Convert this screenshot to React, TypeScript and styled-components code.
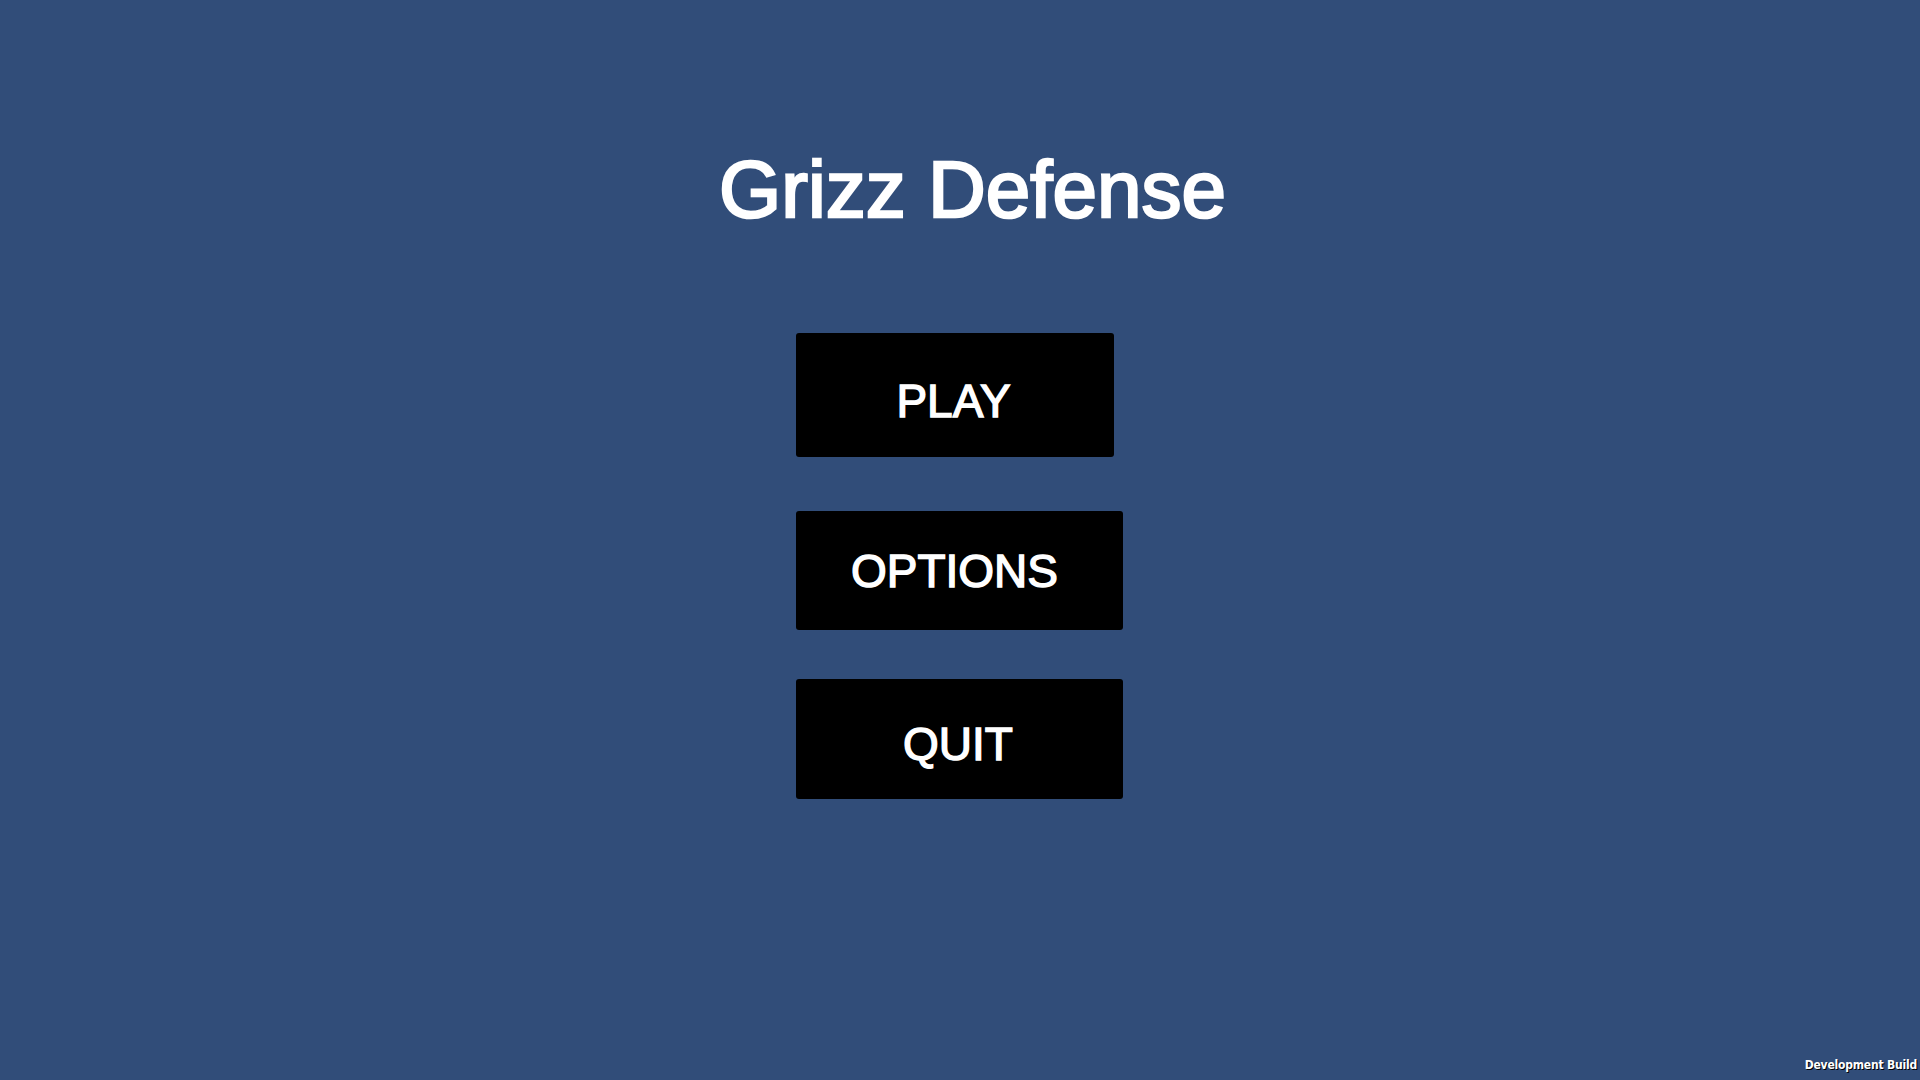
import styled, { createGlobalStyle } from "styled-components";

const Global = createGlobalStyle`
  html, body {
    margin: 0;
    padding: 0;
    background: #314d79;
    overflow: hidden;
  }
`;

const Screen = styled.div`
  position: relative;
  width: 1920px;
  height: 1080px;
  background: #314d79;
  display: flex;
  flex-direction: column;
  align-items: center;
  padding-top: 150px;
  box-sizing: border-box;
  font-family: "Liberation Sans", Arial, sans-serif;
  color: #fff;
`;

const Title = styled.h1`
  margin: 0 0 0 25px;
  font-size: 80px;
  line-height: 80px;
  font-weight: 400;
  -webkit-text-stroke: 2.5px #fff;
`;

const Menu = styled.div`
  width: 327px;
  margin-top: 103px;
  margin-right: 1px;
  display: flex;
  flex-direction: column;
  align-items: flex-start;
`;

const MenuButton = styled.button<{ $w: number; $h: number; $mt?: number; $dy?: number; $dx?: number }>`
  width: ${({ $w }) => $w}px;
  height: ${({ $h }) => $h}px;
  margin-top: ${({ $mt }) => $mt ?? 0}px;
  padding: ${({ $dy }) => ($dy ?? 0) * 2}px 0 0 0;
  background: #000;
  border: none;
  border-radius: 3px;
  display: flex;
  align-items: center;
  justify-content: center;
  color: #fff;
  font-family: "Liberation Sans", Arial, sans-serif;
  font-size: 46px;
  line-height: 46px;
  -webkit-text-stroke: 1.4px #fff;
  cursor: pointer;

  span {
    position: relative;
    left: ${({ $dx }) => $dx ?? 0}px;
  }
`;

const DevBuild = styled.div`
  position: absolute;
  right: 3px;
  bottom: 9px;
  font-family: "DejaVu Sans Condensed", "DejaVu Sans", sans-serif;
  font-weight: 700;
  font-size: 12px;
  line-height: 12px;
  color: #fff;
  text-shadow: 1px 1px 0 #000;
  letter-spacing: -0.2px;
`;

export default function App() {
  return (
    <>
      <Global />
      <Screen>
        <Title>Grizz Defense</Title>
        <Menu>
          <MenuButton $w={318} $h={124} $dy={5.5} $dx={-1.5}>
            <span>PLAY</span>
          </MenuButton>
          <MenuButton $w={327} $h={119} $mt={54} $dx={-5}>
            <span>OPTIONS</span>
          </MenuButton>
          <MenuButton $w={327} $h={120} $mt={49} $dy={5} $dx={-1.5}>
            <span>QUIT</span>
          </MenuButton>
        </Menu>
        <DevBuild>Development Build</DevBuild>
      </Screen>
    </>
  );
}
